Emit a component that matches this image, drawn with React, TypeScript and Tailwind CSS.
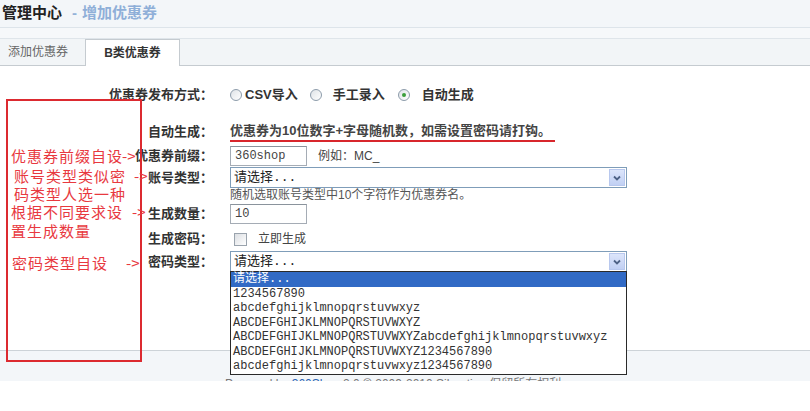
import React from "react";

const sans = "font-['Liberation_Sans','Noto_Sans_CJK_SC',sans-serif]";
const mono = "font-['Liberation_Mono','Noto_Sans_CJK_SC',monospace]";

const passwordTypes = [
  "请选择...",
  "1234567890",
  "abcdefghijklmnopqrstuvwxyz",
  "ABCDEFGHIJKLMNOPQRSTUVWXYZ",
  "ABCDEFGHIJKLMNOPQRSTUVWXYZabcdefghijklmnopqrstuvwxyz",
  "ABCDEFGHIJKLMNOPQRSTUVWXYZ1234567890",
  "abcdefghijklmnopqrstuvwxyz1234567890",
];

function Radio({ checked = false }: { checked?: boolean }) {
  return (
    <span className="inline-flex h-[12px] w-[12px] shrink-0 items-center justify-center rounded-full border border-[#8d9cab] bg-gradient-to-br from-[#dfe3e7] to-white">
      {checked && <span className="h-[4px] w-[4px] rounded-full bg-[#3a9e3a]" />}
    </span>
  );
}

function SelectBox({ children }: { children?: React.ReactNode }) {
  return (
    <div className="relative flex h-[21px] w-[397px] items-center border border-[#7f9db9] bg-white">
      <span className={`pl-[3px] text-[13px] text-[#222] ${mono}`}>请选择...</span>
      <span className="absolute right-[1px] top-[1px] flex h-[17px] w-[16px] items-center justify-center border border-[#b8c8ee] bg-gradient-to-b from-[#dce5fb] to-[#c1d0f3]">
        <svg width="8" height="6" viewBox="0 0 8 6">
          <path d="M1 1.5 L4 4.5 L7 1.5" fill="none" stroke="#4d6185" strokeWidth="1.8" />
        </svg>
      </span>
      {children}
    </div>
  );
}

function Row({
  label,
  className = "",
  children,
}: {
  label?: string;
  className?: string;
  children?: React.ReactNode;
}) {
  return (
    <div className={`flex items-center ${className}`}>
      <div className="w-[213px] shrink-0 text-right text-[13px] font-bold text-[#333]">{label}</div>
      <div className="ml-[17px] flex h-full items-center">{children}</div>
    </div>
  );
}

// red hand-written notes over the left side of the form
function Annotation() {
  return (
    <div className="absolute left-[6px] top-[99px] h-[263px] w-[136px] border-2 border-[#dc2a30] font-['Noto_Sans_CJK_SC',sans-serif] text-[15px] tracking-[1px] text-[#e8393f]">
      <div className="flex flex-col whitespace-nowrap pt-[45px]">
        <div className="flex h-[19px] items-center pl-[3px] leading-[19px]">
          优惠券前缀自设<span className="-ml-[1px] tracking-normal">-&gt;</span>
        </div>
        <div className="mt-[2px] flex h-[18px] items-center pl-[6px] leading-[18px]">
          账号类型类似密<span className="ml-[8px] tracking-normal">-&gt;</span>
        </div>
        <div className="flex h-[18px] items-center pl-[6px] leading-[18px]">码类型人选一种</div>
        <div className="flex h-[18px] items-center pl-[3px] leading-[18px]">
          根据不同要求设<span className="ml-[9px] tracking-normal">-&gt;</span>
        </div>
        <div className="flex h-[19px] items-center pl-[3px] leading-[19px]">置生成数量</div>
        <div className="mt-[13px] flex h-[19px] items-center pl-[4px] leading-[19px]">
          密码类型自设<span className="ml-[18px] tracking-normal">-&gt;</span>
        </div>
      </div>
    </div>
  );
}

export default function App() {
  return (
    <div className={`relative h-[411px] w-[810px] overflow-hidden bg-white ${sans}`}>
      {/* page title */}
      <div className="flex h-[28px] items-center border-b border-[#dde4ea] bg-[#f3f6f9] pl-[2px]">
        <span className="text-[15px] font-bold text-[#222]">管理中心</span>
        <span className="ml-[10px] text-[15px] font-bold text-[#93b2d8]">-</span>
        <span className="ml-[5px] text-[15px] font-bold text-[#8fafd8]">增加优惠券</span>
      </div>
      <div className="h-[11px] border-b border-[#dfe5ea] bg-[#f6f8fa]" />

      {/* tabs */}
      <div className="flex h-[27px] items-end border-b border-[#c5cbd0] bg-[#f2f5f7]">
        <div className="flex h-[26px] w-[83px] items-center pl-[8px] text-[12px] text-[#666]">添加优惠券</div>
        <div className="-mb-px ml-[2px] flex h-[27px] w-[95px] items-center justify-center border border-b-0 border-[#c5cbd0] bg-white text-[12px] font-bold text-[#333]">
          B类优惠券
        </div>
      </div>

      {/* form */}
      <div className="flex h-[284px] flex-col pt-[19px]">
        <Row label="优惠券发布方式：" className="h-[20px]">
          <Radio />
          <span className="ml-[3px] text-[13px] font-bold text-[#333]">CSV导入</span>
          <span className="ml-[12px] flex"><Radio /></span>
          <span className="ml-[11px] text-[13px] font-bold text-[#333]">手工录入</span>
          <span className="ml-[13px] flex"><Radio checked /></span>
          <span className="ml-[12px] text-[13px] font-bold text-[#333]">自动生成</span>
        </Row>

        <Row label="自动生成：" className="mt-[16px] h-[21px]">
          <span className="border-b-2 border-[#d8262c] pr-[4px] text-[13px] font-bold leading-[19px] text-[#444]">
            优惠券为10位数字+字母随机数，如需设置密码请打钩。
          </span>
        </Row>

        <Row label="优惠券前缀：" className="mt-[4px] h-[20px]">
          <div className={`flex h-[20px] w-[77px] items-center border border-[#a5acb5] border-t-[#8a939c] pl-[4px] text-[12px] text-[#444] ${mono}`}>
            360shop
          </div>
          <span className="ml-[11px] text-[12px] text-[#444]">例如：MC_</span>
        </Row>

        <Row label="账号类型：" className="mt-[1px] h-[21px]">
          <SelectBox />
        </Row>

        <Row className="h-[15px]">
          <span className="text-[12px] leading-[15px] text-[#555]">随机选取账号类型中10个字符作为优惠券名。</span>
        </Row>

        <Row label="生成数量：" className="mt-[1px] h-[20px]">
          <div className={`flex h-[20px] w-[77px] items-center border border-[#a5acb5] border-t-[#8a939c] pl-[4px] text-[12px] text-[#444] ${mono}`}>
            10
          </div>
        </Row>

        <Row label="生成密码：" className="mt-[5px] h-[20px]">
          <span className="ml-[4px] h-[13px] w-[13px] border border-[#9aa3ad] bg-gradient-to-br from-[#dcdfe3] to-white" />
          <span className="ml-[11px] text-[12px] text-[#444]">立即生成</span>
        </Row>

        <Row label="密码类型：" className="mt-[2px] h-[21px]">
          <SelectBox>
            <div className={`absolute left-[-1px] top-[19px] z-20 w-[397px] border border-[#2a2a2a] bg-white text-[12px] text-[#333] ${mono}`}>
              {passwordTypes.map((item, i) => (
                <div
                  key={item}
                  className={`h-[14.5px] whitespace-nowrap pl-[2px] leading-[14.5px] ${
                    i === 0 ? "bg-[#316ac5] text-white" : ""
                  }`}
                >
                  {item}
                </div>
              ))}
            </div>
          </SelectBox>
        </Row>
      </div>

      {/* footer */}
      <div className="h-[31px] overflow-hidden border-t border-[#cdd3d8] bg-[#f3f6f9] pl-[225px] pt-[26px] text-[12px] leading-[15px] text-[#777]">
        Powered by <span className="text-[#2a64b4]">360Shop</span> 2.0 © 2009-2010 Sihooting 保留所有权利
      </div>

      <Annotation />
    </div>
  );
}
